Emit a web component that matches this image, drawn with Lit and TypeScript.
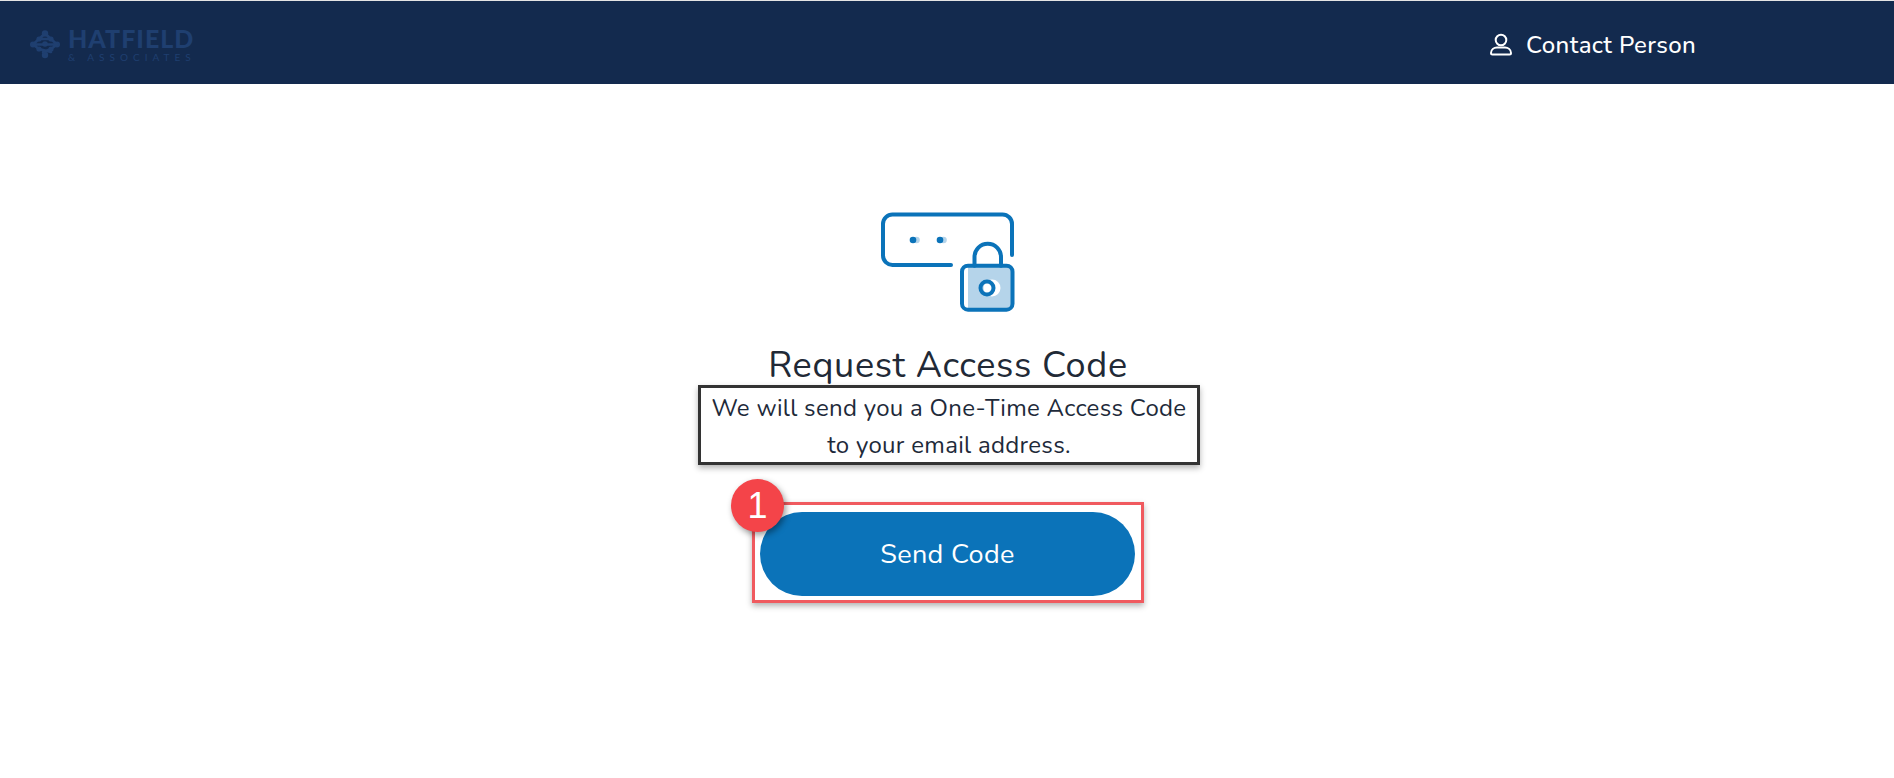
import { LitElement, css, html, svg } from 'lit';
import { customElement } from 'lit/decorators.js';

const logoMark = svg`
  <g fill="#1f3f70">
    <circle cx="15" cy="3.500" r="3.200"/><circle cx="15" cy="25" r="3.200"/>
    <circle cx="3" cy="14.500" r="3"/><circle cx="27" cy="14.500" r="3"/>
    <circle cx="9" cy="9" r="2.600"/><circle cx="21" cy="9" r="2.600"/>
    <circle cx="9" cy="19" r="2.600"/><circle cx="21" cy="19" r="2.600"/>
    <circle cx="15" cy="14" r="2.800"/>
  </g>
  <g fill="none" stroke="#1f3f70" stroke-width="2.600" stroke-linecap="round">
    <path d="M9 9h12M3 14.500h24M9 19l12 3M21 19l-8 3M15 3.500 9 9M15 3.500 21 9M3 14.500 9 9M27 14.500 21 9M3 14.500 9 19M27 14.500 21 19"/>
  </g>`;

@customElement('app-root')
export class AppRoot extends LitElement {
  static styles = css`
    :host {
      display: block;
      font-family: 'Nunito', 'Lato', 'Noto Sans', sans-serif;
      background: #fff;
      height: 778px;
      overflow: hidden;
    }
    .topline {
      height: 1px;
      background: #e4e4e4;
    }
    .bar {
      height: 83px;
      background: #132a4e;
      display: flex;
      align-items: center;
    }
    .logo {
      box-sizing: border-box;
      width: 164px;
      margin-left: 30px;
      margin-top: 4px;
      display: flex;
      align-items: center;
      gap: 8px;
      color: #1f3f70;
    }
    .logo svg {
      flex: none;
    }
    .logo-text {
      display: flex;
      flex-direction: column;
      gap: 6px;
    }
    .logo-name {
      font: 900 25px/18px 'Lato', sans-serif;
      letter-spacing: 1px;
    }
    .logo-sub {
      font: 400 10px/8px 'Lato', sans-serif;
      letter-spacing: 5px;
      white-space: nowrap;
    }
    .contact {
      margin-left: 1295px;
      margin-top: 5px;
      display: flex;
      align-items: center;
      gap: 13px;
      color: #fff;
      font-size: 24px;
      font-weight: 500;
      line-height: 28px;
      letter-spacing: 0.38px;
    }
    .contact svg {
      display: block;
    }
    main {
      display: flex;
      flex-direction: column;
      align-items: center;
      padding-top: 127px;
      margin-left: 2px;
    }
    .hero {
      display: block;
    }
    h1 {
      margin: 32px 0 0;
      font-size: 36px;
      line-height: 41px;
      font-weight: 400;
      color: #212936;
      letter-spacing: 0.65px;
    }
    .note {
      box-sizing: border-box;
      width: 502px;
      height: 80px;
      margin: -1px 0 0 2px;
      border: 3px solid #333;
      box-shadow: 0 3px 6px rgba(0, 0, 0, 0.3);
      text-align: center;
      font-size: 24px;
      line-height: 37px;
      letter-spacing: 0.3px;
      color: #1e2a3a;
      padding-top: 2px;
    }
    .mark {
      position: relative;
      box-sizing: border-box;
      width: 392px;
      height: 101px;
      margin-top: 37px;
      border: 3px solid #f05a5f;
      box-shadow: 0 3px 6px rgba(0, 0, 0, 0.3);
      padding: 7px 6px 0 5px;
    }
    button {
      display: block;
      width: 100%;
      height: 84px;
      border: 0;
      border-radius: 42px;
      background: #0b73b9;
      color: #fff;
      font: inherit;
      font-size: 27px;
      letter-spacing: 0.33px;
    }
    .badge {
      position: absolute;
      left: -24px;
      top: -26px;
      width: 53px;
      height: 53px;
      border-radius: 50%;
      background: #f44449;
      box-shadow: 2px 3px 6px rgba(0, 0, 0, 0.4);
      color: #fff;
      font: 400 36px/53px 'Liberation Sans', sans-serif;
      text-align: center;
    }
  `;

  render() {
    return html`
      <div class="topline"></div>
      <header class="bar">
        <div class="logo">
          <svg width="30" height="29" viewBox="0 0 30 29">${logoMark}</svg>
          <div class="logo-text">
            <span class="logo-name">HATFIELD</span>
            <span class="logo-sub">&amp; ASSOCIATES</span>
          </div>
        </div>
        <div class="contact">
          <svg width="24" height="24" viewBox="0 0 24 24" fill="none" stroke="#fff" stroke-width="2">
            <circle cx="12" cy="7" r="5.300"/>
            <path d="M2 20c0-3.500 3-5.500 6-5.500h8c3 0 6 2 6 5.500 0 1-.5 1.500-1.500 1.500h-17c-1 0-1.500-.5-1.500-1.500z" stroke-linejoin="round"/>
          </svg>
          <span>Contact Person</span>
        </div>
      </header>
      <main>
        <svg class="hero" width="136" height="102" viewBox="0 0 136 102" fill="none">
          <path d="M88 55h42a2 2 0 0 1 2 2v39a2 2 0 0 1-2 2H88z" fill="#b5d4ea"/>
          <circle cx="112" cy="77" r="8.500" fill="#fff"/>
          <circle cx="36.500" cy="29" r="3.300" fill="#b5d4ea"/>
          <circle cx="63.500" cy="29" r="3.300" fill="#b5d4ea"/>
          <circle cx="33" cy="29" r="3.300" fill="#0b73b9"/>
          <circle cx="60" cy="29" r="3.300" fill="#0b73b9"/>
          <g stroke="#0b73b9" stroke-width="4" stroke-linecap="round" stroke-linejoin="round">
            <path d="M132 44V13a9.500 9.500 0 0 0-9.500-9.500H13A9.500 9.500 0 0 0 3 13v31.500A9.500 9.500 0 0 0 13 54h58"/>
            <rect x="82" y="54.700" width="50.500" height="44" rx="6"/>
            <path d="M94.500 54.700V46a13.250 13.250 0 0 1 26.500 0v8.700"/>
            <circle cx="107" cy="77" r="6.500"/>
          </g>
        </svg>
        <h1>Request Access Code</h1>
        <div class="note">We will send you a One-Time Access Code<br />to your email address.</div>
        <div class="mark">
          <span class="badge">1</span>
          <button>Send Code</button>
        </div>
      </main>
    `;
  }
}

declare global {
  interface HTMLElementTagNameMap {
    'app-root': AppRoot;
  }
}
